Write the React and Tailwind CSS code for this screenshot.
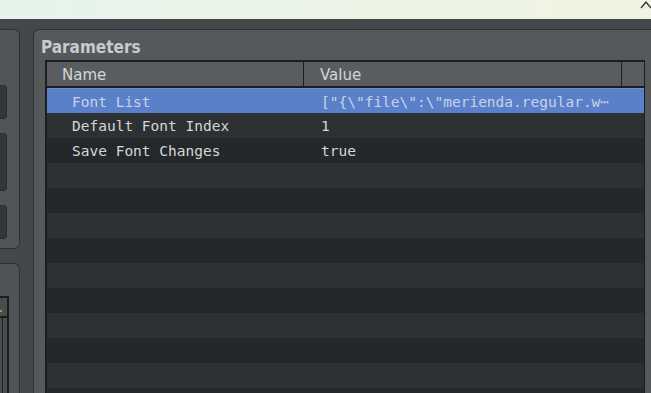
import React from "react";

const rows = [
  { name: "Font List", value: '["{\\"file\\":\\"merienda.regular.w\u22EF' },
  { name: "Default Font Index", value: "1" },
  { name: "Save Font Changes", value: "true" },
];

export default function App() {
  const body = [];
  for (let i = 0; i < 13; i++) {
    const r = rows[i];
    const selected = i === 0;
    const bg = selected
      ? "bg-[#5a80c9] border-t border-[#6b90d6]"
      : i % 2 === 1
      ? "bg-[#2d3134]"
      : "bg-[#24282b]";
    body.push(
      <div
        key={i}
        className={`flex h-[25px] shrink-0 items-center pt-[3px] ${bg} ${
          selected ? "text-[#c9d3e8]" : "text-[#d4d7d6]"
        }`}
      >
        <div className="w-[258px] shrink-0 pl-[25px] whitespace-nowrap overflow-hidden">
          {r ? r.name : ""}
        </div>
        <div className="flex-1 pl-[16px] whitespace-nowrap overflow-hidden">
          {r ? r.value : ""}
        </div>
      </div>
    );
  }

  return (
    <div
      className="w-[651px] h-[393px] overflow-hidden flex flex-col bg-[#45484b]"
      style={{ fontFamily: '"DejaVu Sans", sans-serif' }}
    >
      {/* top bar */}
      <div className="h-[19px] shrink-0 bg-gradient-to-r from-[#e6f4ec] to-[#f1f4e2] flex justify-end">
        <svg width="14" height="10" viewBox="0 0 14 10" className="-mr-[2px]">
          <polyline points="2,8 7,2 12,8" fill="none" stroke="#2e3032" strokeWidth="1.4" />
        </svg>
      </div>

      <div className="flex flex-1 pt-[10px] min-h-0">
        {/* left column */}
        <div className="-ml-[10px] w-[30px] shrink-0 flex flex-col">
          <div className="h-[220px] shrink-0 bg-[#525558] border border-l-0 border-[#2e3133] rounded-r-[6px] pt-[55px] flex flex-col gap-[14px]">
            <div className="h-[34px] w-[17px] bg-[#33373a] border border-l-0 border-[#2a2d30] rounded-r-[4px]" />
            <div className="h-[58px] w-[17px] bg-[#33373a] border border-l-0 border-[#2a2d30] rounded-r-[4px]" />
            <div className="h-[34px] w-[17px] bg-[#33373a] border border-l-0 border-[#2a2d30] rounded-r-[4px]" />
          </div>
          <div className="mt-[14px] flex-1 bg-[#505356] border border-l-0 border-b-0 border-[#2e3133] rounded-tr-[6px] pt-[32px]">
            <div className="w-[19px] h-[200px] border-2 border-l-0 border-[#1c1e20] bg-[#4a4d50] flex flex-col">
              <div className="h-[20px] border-b-2 border-[#1c1e20] relative">
                <div className="absolute left-[10px] top-[12px] w-[2px] h-[2px] bg-[#c8883a]" />
              </div>
              <div className="flex-1 ml-[12px] w-[2px] border-l border-[#1c1e20]" />
            </div>
          </div>
        </div>

        {/* parameters panel */}
        <div className="ml-[13px] flex-1 -mr-[20px] bg-[#56595c] border border-b-0 border-[#2e3133] rounded-tl-[6px] flex flex-col min-h-0">
          <div
            className="h-[30px] shrink-0 pl-[7px] pt-[8px] text-[17px] leading-[18px] font-bold text-[#c8cbcd]"
            style={{ fontFamily: '"DejaVu Sans Condensed", "DejaVu Sans", sans-serif', fontStretch: "condensed" }}
          >
            Parameters
          </div>
          <div className="ml-[11px] w-[600px] flex-1 min-h-0 border-2 border-b-0 border-r border-[#1b1d1f] flex flex-col overflow-hidden">
            <div className="h-[24px] shrink-0 flex bg-[#5a5d60] text-[15px] text-[#d3d6d6] items-center">
              <div className="w-[257px] shrink-0 pl-[15px] pt-[3px] h-full flex items-center border-r border-[#1b1d1f]">
                Name
              </div>
              <div className="w-[318px] shrink-0 pl-[16px] pt-[3px] h-full flex items-center border-r border-[#1b1d1f]">
                Value
              </div>
              <div className="flex-1" />
            </div>
            <div className="h-[2px] shrink-0 bg-[#1b1d1f]" />
            <div
              className="flex flex-col text-[14.5px]"
              style={{ fontFamily: '"DejaVu Sans Mono", monospace' }}
            >
              {body}
            </div>
          </div>
        </div>
      </div>
    </div>
  );
}
